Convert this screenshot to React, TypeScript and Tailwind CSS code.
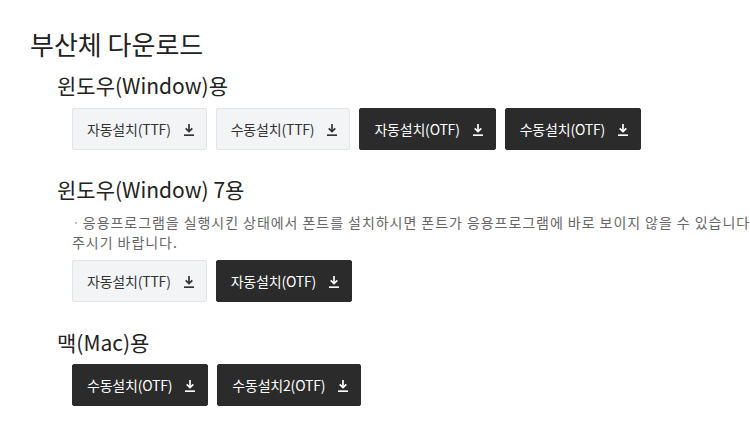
import React from "react";

const DownIcon = () => (
    <svg width="12" height="13" viewBox="0 0 12 13" fill="none" stroke="currentColor" strokeWidth="1.7">
        <path d="M6 1v7.3" />
        <path d="M2.7 5.3L6 8.6l3.3-3.3" />
        <path d="M1 12.2h10" />
    </svg>
);

type Btn = { label: string; dark?: boolean };

const DownloadButton = ({ label, dark }: Btn) => (
    <button
        className={
            dark
                ? "h-[42px] flex items-center gap-[12px] pl-[14px] pr-[11px] rounded-[2px] bg-[#2b2b2b] text-white border border-[#2b2b2b]"
                : "h-[42px] flex items-center gap-[12px] pl-[14px] pr-[11px] rounded-[2px] bg-[#f3f4f6] text-[#333] border border-[#e2e4e8]"
        }
    >
        <span className="text-[14px] tracking-[-0.2px]">{label}</span>
        <DownIcon />
    </button>
);

const Section = ({ title, children }: { title: string; children: React.ReactNode }) => (
    <section className="pl-[57px]">
        <h2 className="text-[21px] leading-[28px] text-[#222] font-normal">{title}</h2>
        {children}
    </section>
);

export default function App() {
    return (
        <div
            className="w-[750px] h-[443px] overflow-hidden bg-white"
            style={{ fontFamily: '"Noto Sans CJK KR", "Noto Sans", sans-serif' }}
        >
            <div className="pt-[28px]">
                <h1 className="pl-[30px] text-[26px] leading-[32px] text-[#222] font-normal">부산체 다운로드</h1>

                <div className="mt-[11px]">
                    <Section title="윈도우(Window)용">
                        <div className="mt-[9px] pl-[15px] flex gap-[9px]">
                            <DownloadButton label="자동설치(TTF)" />
                            <DownloadButton label="수동설치(TTF)" />
                            <DownloadButton label="자동설치(OTF)" dark />
                            <DownloadButton label="수동설치(OTF)" dark />
                        </div>
                    </Section>
                </div>

                <div className="mt-[25px]">
                    <Section title="윈도우(Window) 7용">
                        <p className="mt-[9px] pl-[15px] whitespace-nowrap text-[14px] leading-[20px] tracking-[0.95px] text-[#666]">
                            <span className="text-[#aaa] mr-[2px]">·</span>
                            응용프로그램을 실행시킨 상태에서 폰트를 설치하시면 폰트가 응용프로그램에 바로 보이지 않을 수 있습니다. 재실행해
                            <br />
                            주시기 바랍니다.
                        </p>
                        <div className="mt-[8px] pl-[15px] flex gap-[9px]">
                            <DownloadButton label="자동설치(TTF)" />
                            <DownloadButton label="자동설치(OTF)" dark />
                        </div>
                    </Section>
                </div>

                <div className="mt-[26px]">
                    <Section title="맥(Mac)용">
                        <div className="mt-[8px] pl-[15px] flex gap-[9px]">
                            <DownloadButton label="수동설치(OTF)" dark />
                            <DownloadButton label="수동설치2(OTF)" dark />
                        </div>
                    </Section>
                </div>
            </div>
        </div>
    );
}
